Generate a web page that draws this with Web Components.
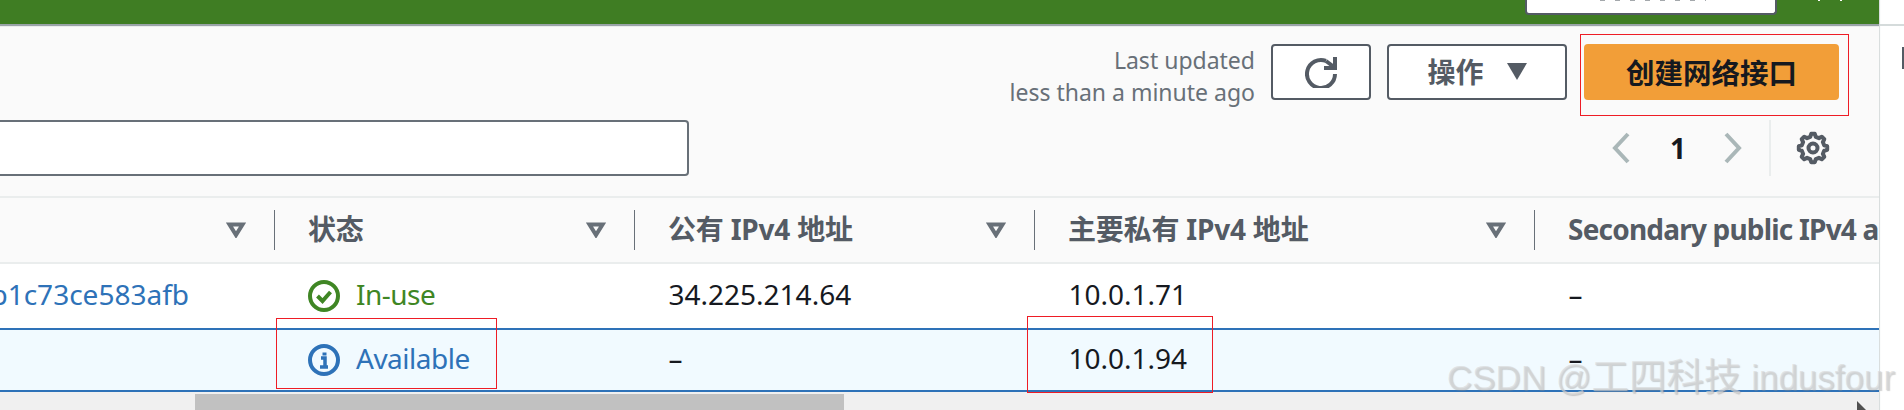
<!DOCTYPE html>
<html><head><meta charset="utf-8">
<style>
html,body{margin:0;padding:0;background:#fff;height:410px;overflow:hidden}
body{font-family:"Noto Sans","Noto Sans CJK SC",sans-serif;font-size:28px;position:relative}
</style></head><body>
<console-page>
  <top-bar></top-bar>
  <page-toolbar></page-toolbar>
  <eni-table></eni-table>
  <h-scroll></h-scroll>
</console-page>
<side-gutter></side-gutter>
<mark-box style="left:1580px;top:34px;width:267px;height:80px"></mark-box>
<mark-box style="left:276px;top:318px;width:219px;height:69px"></mark-box>
<mark-box style="left:1027px;top:316px;width:184px;height:75px"></mark-box>
<water-mark>CSDN @<span style="font-size:37.5px">工四科技</span> indusfour</water-mark>
<script>
function def(name,html,init){
  customElements.define(name,class extends HTMLElement{
    constructor(){super();const r=this.attachShadow({mode:'open'});r.innerHTML=html;if(init)init(r,this);}
  });
}
def('console-page',`<style>:host{display:flex;flex-direction:column;width:1879px;height:410px;overflow:hidden;background:#fafafa}</style><slot></slot>`);
def('side-gutter',`<style>:host{display:block;position:absolute;left:1879px;top:0;width:25px;height:410px;background:#fff;box-shadow:inset 2px 0 1px -1px #d5dbdb}
.l{position:absolute;left:0;right:0;top:24px;height:2px;background:#d5dbdb}
.m{position:absolute;left:23px;top:47px;width:2px;height:22px;background:#545b64}</style><div class="l"></div><div class="m"></div>`);
def('top-bar',`<style>:host{display:flex;flex:none;height:24px;background:#3f7d23;box-shadow:0 2px 1px #9aa3a8;position:relative;justify-content:flex-end;box-sizing:border-box;padding-right:37px}
.b{width:252px;height:15px;background:#fff;border:2px solid #545b64;border-top:0;border-radius:0 0 4px 4px;overflow:hidden;box-sizing:border-box;margin-right:41px;padding-left:73px}
.s{width:106px;height:1px;background:repeating-linear-gradient(90deg,#a4a8ac 0 5px,#fff 5px 15px)}
.d{width:2px;height:1px;background:#fff;margin-right:20px}.d:last-child{margin-right:0}</style><div class="b"><div class="s"></div></div><div class="d"></div><div class="d"></div>`);
def('page-toolbar',`<style>:host{display:grid;flex:none;grid-template-rows:76px 78px;height:174px;box-sizing:border-box;padding-top:20px;border-bottom:2px solid #eaeded;color:#545b64}
.r1{display:flex;justify-content:flex-end;align-items:flex-start;padding-right:40px}
.upd{font-size:23px;line-height:32px;text-align:right;color:#687078;margin:0 16px 0 0;white-space:nowrap}
.btn{box-sizing:border-box;height:56px;border:2px solid #545b64;border-radius:4px;background:#fff;display:flex;align-items:center;justify-content:center;font-weight:700;color:#545b64}
.btn span{padding-bottom:2px}
.ref{width:100px;margin-right:16px}
.act{width:180px;margin-right:17px;gap:23px}
.pri{width:255px;background:#f29e38;border:0;color:#16191f;font-size:28.5px}
.r2{display:flex;align-items:stretch;height:56px}
.inp{box-sizing:border-box;width:689px;height:56px;background:#fff;border:2px solid #687078;border-left:0;border-radius:0 4px 4px 0}
.sp{flex:1}
.pg{display:flex;align-items:center;color:#16191f;font-weight:700}
.n{width:92px;text-align:center;padding-left:2px}
.div{width:2px;background:#eaeded;margin:0 25px 0 27px}
.gear{align-self:center;margin-right:49px;display:block}
svg{display:block}
</style>
<div class="r1"><p class="upd">Last updated<br>less than a minute ago</p>
<div class="btn ref"><svg width="32" height="32" viewBox="0 0 32 32" fill="none" stroke="#545b64" stroke-width="4"><path d="M30 18A14 14 0 1 1 21 4.9"/><path d="M30 1v11H19"/><path d="M21 5l8 6"/></svg></div>
<div class="btn act"><span>操作</span><svg width="20" height="18" viewBox="0 0 20 18"><path d="M0 0h20L10 17z" fill="#545b64"/></svg></div>
<div class="btn pri"><span>创建网络接口</span></div></div>
<div class="r2"><div class="inp"></div><div class="sp"></div>
<div class="pg"><svg width="18" height="32" viewBox="0 0 18 32" fill="none" stroke="#aab7b8" stroke-width="4"><path d="M16 2 3 16l13 14"/></svg><span class="n">1</span><svg width="18" height="32" viewBox="0 0 18 32" fill="none" stroke="#aab7b8" stroke-width="4"><path d="M2 2l13 14L2 30"/></svg></div>
<div class="div"></div>
<svg class="gear" width="34" height="34" viewBox="0 0 34 34"><path id="g" fill="none" stroke="#545b64" stroke-width="4" stroke-linejoin="round"/><circle cx="17" cy="17" r="4.5" fill="none" stroke="#545b64" stroke-width="4"/></svg>
</div>`,(r)=>{
  let d='';const n=8,c=17;
  for(let i=0;i<n;i++){
    const a=i*Math.PI*2/n-Math.PI/2;const s=Math.PI/n;
    const P=(rad,ang)=>(c+rad*Math.cos(ang)).toFixed(2)+' '+(c+rad*Math.sin(ang)).toFixed(2);
    d+=(i?'L':'M')+P(11.5,a-s*.62)+'L'+P(14.3,a-s*.32)+'L'+P(14.3,a+s*.32)+'L'+P(11.5,a+s*.62);
  }
  r.getElementById('g').setAttribute('d',d+'Z');
});
const COLS='275px 360px 400px 500px 344px';
const H=(t,f=true,c='')=>`<div class="th"><span class="t ${c}">${t}</span>${f?'<svg width="20" height="16" viewBox="0 0 20 16" fill="none" stroke="#687078" stroke-width="4" stroke-linejoin="miter"><path d="M3.5 2.5h13L10 13z"/></svg><i></i>':''}</div>`;
def('eni-table',`<style>:host{display:block;flex:none;color:#16191f}
.row{display:grid;grid-template-columns:${COLS};overflow:hidden}
.head{height:64px;background:#fafafa;border-bottom:2px solid #eaeded;color:#545b64;font-weight:700}
.th{display:flex;align-items:center;padding-left:33px;min-width:0;overflow:hidden;white-space:nowrap}
.th:first-child{padding-left:0}
.t{flex:1;line-height:40px;letter-spacing:-.2px;padding-bottom:2px}
.t.en{letter-spacing:-.8px}
.th svg{margin-right:28px;flex:none}
.th i{width:2px;height:40px;background:#687078;flex:none;margin-right:-1px}
.b1{height:64px;background:#fff}
.b2{height:60px;background:#f1faff;border-top:2px solid #2e72b8;border-bottom:2px solid #2e72b8}
.td{display:flex;align-items:center;padding-left:33.5px;white-space:nowrap;overflow:hidden;min-width:0;line-height:40px}
.td>span{padding-bottom:4px}
.link{padding-left:0;padding-right:86px;justify-content:flex-end;color:#2e72b8}
.st{gap:16px;padding-left:33px}
.st span{letter-spacing:-.5px}
.st svg{flex:none;display:block}
.g{color:#3f8624}.bl{color:#2e72b8}
</style>
<div class="row head">${H('')}${H('状态')}${H('公有 IPv4 地址')}${H('主要私有 IPv4 地址')}${H('Secondary public IPv4 address',false,'en')}</div>
<div class="row b1">
 <div class="td link"><span>b1c73ce583afb</span></div>
 <div class="td st g"><svg width="32" height="32" viewBox="0 0 32 32" fill="none" stroke="#3f8624" stroke-width="4"><circle cx="16" cy="16" r="14"/><path d="M9.5 16l5 5 8-9"/></svg><span>In-use</span></div>
 <div class="td"><span>34.225.214.64</span></div><div class="td"><span>10.0.1.71</span></div><div class="td"><span>–</span></div></div>
<div class="row b2">
 <div class="td"></div>
 <div class="td st bl"><svg width="32" height="32" viewBox="0 0 32 32" fill="none" stroke="#2e72b8" stroke-width="4"><circle cx="16" cy="16" r="14"/><path d="M13 14h4v9M12 23h8" stroke-width="3.5"/><path d="M14.5 8.5h4v3h-4z" fill="#2e72b8" stroke="none"/></svg><span>Available</span></div>
 <div class="td"><span>–</span></div><div class="td"><span>10.0.1.94</span></div><div class="td"><span>–</span></div></div>`);
def('h-scroll',`<style>:host{display:flex;flex:1;background:#f0f0f0;padding:2px 13px 0 195px;box-sizing:border-box;align-items:stretch;justify-content:space-between}
.th{width:649px;background:#c1c1c1}
svg{align-self:flex-end;display:block}</style><div class="th"></div><svg width="9" height="9" viewBox="0 0 9 9"><path d="M0 0l9 9H0z" fill="#505050"/></svg>`);
def('mark-box',`<style>:host{display:block;position:absolute;border:1px solid #ee1c25;box-sizing:content-box;pointer-events:none}</style>`);
def('water-mark',`<style>:host{display:block;position:absolute;left:1447px;top:356px;font-family:"Liberation Sans","Noto Sans CJK SC",sans-serif;font-size:35px;line-height:42px;white-space:nowrap;color:rgba(215,215,215,.65);text-shadow:1px 1px 1px rgba(140,140,140,.4)}</style><slot></slot>`);
</script>
</body></html>
